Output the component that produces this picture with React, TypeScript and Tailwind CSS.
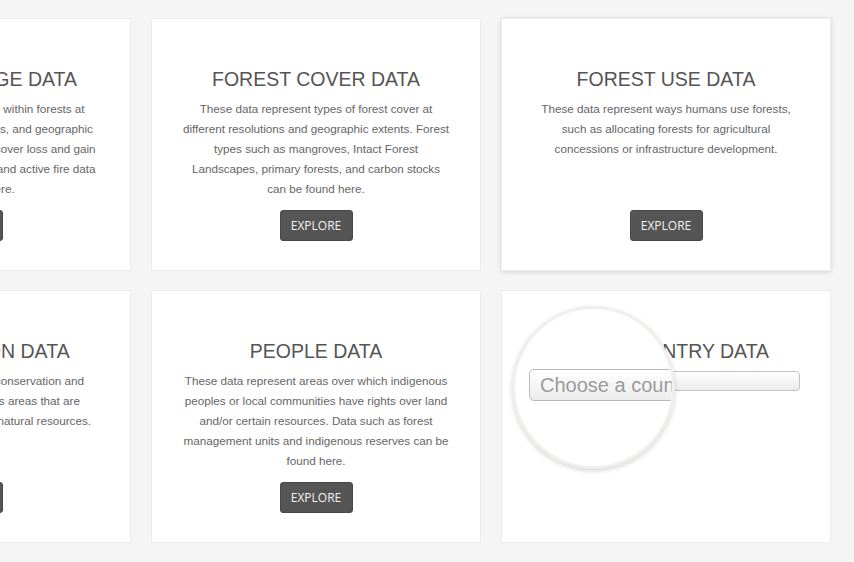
import React from 'react';

interface Card {
  title: string;
  lines: string[];
  raised?: boolean;
  country?: boolean;
}

const cards: Card[] = [
  {
    title: 'FOREST CHANGE DATA',
    lines: [
      'These data represent change within forests at',
      'different resolutions, time scales, and geographic',
      'extents. Data such as the tree cover loss and gain',
      'data, forest disturbance alerts, and active fire data',
      'can be found here.',
    ],
  },
  {
    title: 'FOREST COVER DATA',
    lines: [
      'These data represent types of forest cover at',
      'different resolutions and geographic extents. Forest',
      'types such as mangroves, Intact Forest',
      'Landscapes, primary forests, and carbon stocks',
      'can be found here.',
    ],
  },
  {
    title: 'FOREST USE DATA',
    raised: true,
    lines: [
      'These data represent ways humans use forests,',
      'such as allocating forests for agricultural',
      'concessions or infrastructure development.',
    ],
  },
  {
    title: 'CONSERVATION DATA',
    lines: [
      'These data represent forest conservation and',
      'biodiversity hotspots, such as areas that are',
      'protected to conserve all their natural resources.',
    ],
  },
  {
    title: 'PEOPLE DATA',
    lines: [
      'These data represent areas over which indigenous',
      'peoples or local communities have rights over land',
      'and/or certain resources. Data such as forest',
      'management units and indigenous reserves can be',
      'found here.',
    ],
  },
  { title: 'COUNTRY DATA', lines: [], country: true },
];

const sans = { fontFamily: '"Liberation Sans", Arial, Helvetica, sans-serif' };

function Magnifier() {
  return (
    <div className="absolute left-[10px] top-[15px] w-[163px] h-[163px] rounded-full overflow-hidden bg-white border-[3px] border-[#efefeb] shadow-[0_2px_5px_rgba(0,0,0,0.16)]">
      <div className="absolute left-[14px] top-[60px] w-[420px] h-[32px] rounded-[5px] border border-[#b9b9b9] bg-gradient-to-b from-white to-[#ececec] flex items-center pl-[10px]">
        <span className="text-[20px] text-[#9a9a9a] leading-none" style={sans}>
          Choose a country
        </span>
      </div>
    </div>
  );
}

function DataCard({ card }: { card: Card }) {
  return (
    <div
      className={
        'relative h-[253px] bg-white border border-[#ececec] flex flex-col items-center pt-[48px] ' +
        (card.raised ? 'shadow-[0_1px_5px_rgba(0,0,0,0.14)]' : '')
      }
    >
      <h2
        className={
          'text-[19.5px] leading-[24px] text-[#555] whitespace-nowrap ' + (card.country ? 'pl-[56px]' : '')
        }
        style={sans}
      >
        {card.title}
      </h2>
      {card.country ? (
        <>
          <div className="mt-[8px] w-[268px] h-[20px] rounded-[4px] border border-[#c4c4c4] bg-gradient-to-b from-white to-[#ececec]" />
          <Magnifier />
        </>
      ) : (
        <>
          <p className="mt-[8px] h-[100px] text-center text-[11.7px] leading-[20px] text-[#666] whitespace-nowrap" style={sans}>
            {card.lines.map((l, i) => (
              <React.Fragment key={i}>
                {l}
                {i < card.lines.length - 1 && <br />}
              </React.Fragment>
            ))}
          </p>
          <button
            className="mt-[11px] w-[73px] h-[31px] rounded-[3px] bg-[#555] border border-[#484848] text-[12px] text-[#f2f2f2]"
            style={{ fontFamily: '"Open Sans", "Noto Sans", sans-serif' }}
          >
            EXPLORE
          </button>
        </>
      )}
    </div>
  );
}

export default function App() {
  return (
    <div className="w-[854px] h-[562px] overflow-hidden bg-[#f5f5f5]">
      <div className="ml-[-199px] pt-[18px] grid grid-cols-[330px_330px_330px] gap-x-[20px] gap-y-[19px]">
        {cards.map((c) => (
          <DataCard key={c.title} card={c} />
        ))}
      </div>
    </div>
  );
}
